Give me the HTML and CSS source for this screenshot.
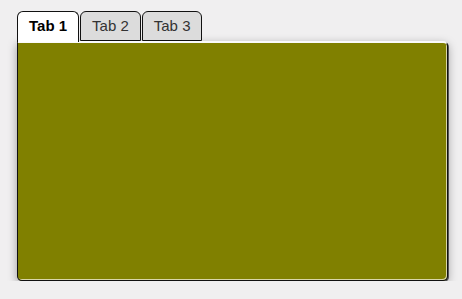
FILE: index.html
```html
<!DOCTYPE html>
<html lang="en">
<head>
  <meta charset="UTF-8" />
  <title>Tabs</title>
  <link rel="stylesheet" href="styles.css">
</head>
<body>

  <div class="tabs">
    <div class="tab-list">
      <div class="tab active">Tab 1</div>
      <div class="tab">Tab 2</div>
      <div class="tab">Tab 3</div>
    </div>
    <div class="tab-panel"></div>
  </div>

</body>
</html>
```

FILE: styles.css
```css
body {
  font-family: "Liberation Sans", Arial, sans-serif;
  margin: 0;
  background-color: #f0eff0;
}

.tabs {
  padding: 11px 14px 0 17px;
}

.tab-list {
  display: flex;
  gap: 1px;
  position: relative;
  z-index: 1;
}

.tab {
  height: 28px;
  line-height: 28px;
  padding: 0 11px;
  font-size: 15px;
  color: #333;
  background: #dcdcdc;
  border: 1px solid #111;
  border-radius: 6px 6px 0 0;
}

.tab.active {
  font-weight: bold;
  color: #000;
  background: #fff;
  height: 30px;
  border-bottom: none;
  margin-bottom: -2px;
}

.tab-panel {
  height: 237px;
  background: #808000;
  border: 1px solid #111;
  border-top: 2px solid #fafafa;
  border-radius: 0 5px 5px 5px;
  box-shadow: inset -1px -1px 0 #d9d6a8, 1px 1px 0 #555, 0 3px 10px rgba(0,0,0,0.35);
}
```
